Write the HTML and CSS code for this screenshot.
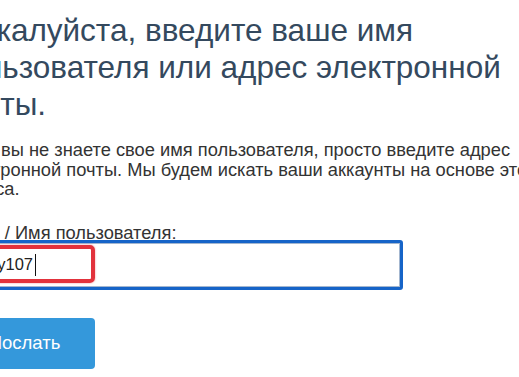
FILE: index.html
```html
<!DOCTYPE html>
<html lang="ru">
<head>
<meta charset="utf-8">
<link rel="stylesheet" href="styles.css">
</head>
<body>
<div class="page">
  <h1 class="title">Пожалуйста, введите ваше имя пользователя или адрес электронной почты.</h1>
  <p class="intro">Если вы не знаете свое имя пользователя, просто введите адрес электронной почты. Мы будем искать ваши аккаунты на основе этого адреса.</p>
  <label class="label">Email / Имя пользователя:</label>
  <div class="field">
    <div class="input"><span class="value-box"><span class="value">ivanovy107</span></span><span class="caret"></span></div>
    <div class="mark"></div>
  </div>
  <button class="submit">Послать</button>
</div>
</body>
</html>
```
FILE: styles.css
```css
html, body {
  margin: 0;
  padding: 0;
  background: #ffffff;
  overflow: hidden;
}
body {
  width: 519px;
  height: 377px;
  font-family: "Liberation Sans", Arial, sans-serif;
}
.page {
  margin-left: -46px;
  width: 596px;
  padding-top: 12px;
}
.title {
  margin: 0 0 0 -4px;
  font-weight: normal;
  font-size: 31.5px;
  line-height: 37px;
  color: #34495e;
}
.intro {
  margin: 17px 0 0;
  font-size: 18.3px;
  line-height: 19.5px;
  color: #333333;
}
.label {
  display: block;
  margin-top: 24px;
  font-size: 18.3px;
  line-height: 19px;
  height: 17px;
  overflow: hidden;
  color: #333333;
}
.field {
  position: relative;
  width: 449px;
}
.input {
  box-sizing: border-box;
  height: 50px;
  border: 3px solid #1664c8;
  border-radius: 3px;
  box-shadow: inset 0 0 0 1px #a3b6cf;
  display: flex;
  align-items: center;
  padding-left: 9px;
  font-size: 16.5px;
  color: #222;
}
.value-box {
  display: flex;
  justify-content: flex-end;
  width: 67px;
  white-space: nowrap;
}
.caret {
  display: inline-block;
  width: 1px;
  height: 22px;
  background: #111;
  margin-left: 2px;
}
.mark {
  position: absolute;
  left: -10px;
  top: 5px;
  width: 151px;
  height: 38px;
  box-sizing: border-box;
  border: 4px solid #e2323c;
  border-radius: 5px;
  box-shadow: 0 0 2px rgba(226, 50, 60, 0.6);
}
.submit {
  display: block;
  margin-top: 28px;
  width: 141px;
  height: 51px;
  border: none;
  border-radius: 4px;
  background: #3498db;
  color: #ffffff;
  font-family: "Liberation Sans", Arial, sans-serif;
  font-size: 18.5px;
  padding: 0;
}
```
